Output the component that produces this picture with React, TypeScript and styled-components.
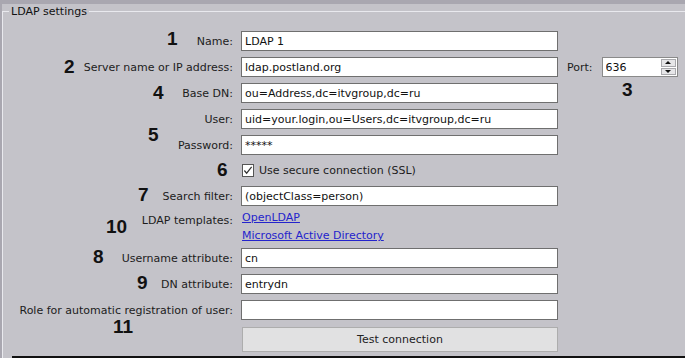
import React from 'react';
import styled, { createGlobalStyle } from 'styled-components';

const GlobalStyle = createGlobalStyle`
  html, body {
    margin: 0;
    padding: 0;
    background: #c4c3c9;
    overflow: hidden;
  }
  body {
    font-family: "DejaVu Sans", Verdana, sans-serif;
    font-size: 11px;
    color: #1c1c1c;
  }
`;

type Badge = { n: string, x: number, y: number };

const badges: Badge[] = [
  { n: '1', x: 167, y: 29 },
  { n: '2', x: 64, y: 57 },
  { n: '3', x: 622, y: 80 },
  { n: '4', x: 153, y: 83 },
  { n: '5', x: 148, y: 125 },
  { n: '6', x: 217, y: 160 },
  { n: '7', x: 138, y: 185 },
  { n: '10', x: 106, y: 217 },
  { n: '8', x: 93, y: 247 },
  { n: '9', x: 137, y: 273 },
  { n: '11', x: 113, y: 317 },
];

const fields = [
  { label: 'Name:', value: 'LDAP 1' },
  { label: 'Server name or IP address:', value: 'ldap.postland.org', port: true },
  { label: 'Base DN:', value: 'ou=Address,dc=itvgroup,dc=ru' },
  { label: 'User:', value: 'uid=your.login,ou=Users,dc=itvgroup,dc=ru' },
  { label: 'Password:', value: '*****' },
];

export default function App(): React.FunctionComponentElement<JSX.Element> {
  return (
    <Window>
      <GlobalStyle />
      <Panel>
        <GroupBox>
          <Legend>LDAP settings</Legend>
          <Form>
            {fields.map(f => (
              <React.Fragment key={f.label}>
                <Label>{f.label}</Label>
                <Input defaultValue={f.value} />
                {f.port && (
                  <PortGroup>
                    <span>Port:</span>
                    <Spin>
                      <SpinInput defaultValue='636' />
                      <SpinButtons>
                        <SpinButton $up><i /></SpinButton>
                        <SpinButton><i /></SpinButton>
                      </SpinButtons>
                    </Spin>
                  </PortGroup>
                )}
              </React.Fragment>
            ))}

            <CheckRow>
              <CheckBox>
                <svg width='11' height='11' viewBox='0 0 11 11'>
                  <path d='M1.5 5.5 L4 8.5 L9.5 1.5' fill='none' stroke='#333' strokeWidth='1.3' />
                </svg>
              </CheckBox>
              <span>Use secure connection (SSL)</span>
            </CheckRow>

            <Label>Search filter:</Label>
            <Input defaultValue='(objectClass=person)' />

            <Label $top>LDAP templates:</Label>
            <Links>
              <Link href='#'>OpenLDAP</Link>
              <Link href='#'>Microsoft Active Directory</Link>
            </Links>

            <Label>Username attribute:</Label>
            <Input defaultValue='cn' />

            <Label>DN attribute:</Label>
            <Input defaultValue='entrydn' />

            <Label>Role for automatic registration of user:</Label>
            <Input defaultValue='' />

            <TestButton type='button'>Test connection</TestButton>
          </Form>
          <NextPane />
        </GroupBox>
      </Panel>

      {badges.map(b => (
        <Number key={b.n} $x={b.x} $y={b.y}>{b.n}</Number>
      ))}
    </Window>
  );
}

// STYLES
const Window = styled.div`
  position: relative;
  box-sizing: border-box;
  height: 358px;
  background: #a9a7b0;
  padding: 4px 0 0 2px;
  display: flex;
  flex-direction: column;
  overflow: hidden;
`

const Panel = styled.div`
  flex: 1;
  background: #c4c3c9;
  padding-top: 1px;
`

const GroupBox = styled.fieldset`
  margin: 0;
  padding: 0;
  border: 0;
  border-top: 1px solid #e9e9ee;
  border-left: 1px solid #e9e9ee;
  min-width: 0;
`

const Legend = styled.legend`
  margin-left: 6px;
  padding: 0 2px;
  line-height: 13px;
  font-size: 11px;
  color: #111;
`

const Form = styled.div`
  display: grid;
  grid-template-columns: 230px 317px auto;
  column-gap: 8px;
  row-gap: 6px;
  align-items: center;
  margin-top: 13px;
`

const Label = styled.label<{ $top?: boolean }>`
  grid-column: 1;
  justify-self: end;
  white-space: nowrap;
  align-self: ${props => props.$top ? 'start' : 'center'};
  padding-top: ${props => props.$top ? '2px' : '0'};
  line-height: 13px;
`

const Input = styled.input`
  grid-column: 2;
  box-sizing: border-box;
  width: 100%;
  height: 20px;
  margin: 0;
  padding: 0 3px;
  border: 1px solid #6f6f6f;
  background: #fff;
  font-family: inherit;
  font-size: 11px;
  color: #111;
  outline: none;
`

const PortGroup = styled.div`
  grid-column: 3;
  display: flex;
  align-items: center;
  gap: 9px;
  margin-left: 1px;
`

const Spin = styled.div`
  box-sizing: border-box;
  display: flex;
  width: 76px;
  height: 20px;
  border: 1px solid #8a8a8a;
  background: #fff;
`

const SpinInput = styled.input`
  flex: 1;
  min-width: 0;
  border: 0;
  padding: 0 3px;
  font-family: inherit;
  font-size: 11px;
  color: #111;
  outline: none;
`

const SpinButtons = styled.div`
  display: flex;
  flex-direction: column;
  width: 15px;
  padding: 1px 1px 1px 0;
  gap: 1px;
`

const SpinButton = styled.div<{ $up?: boolean }>`
  flex: 1;
  display: flex;
  align-items: center;
  justify-content: center;
  background: #e6e6e8;
  border: 1px solid #a9a9ad;

  & > i {
    width: 0;
    height: 0;
    border-left: 3px solid transparent;
    border-right: 3px solid transparent;
    ${props => props.$up ? 'border-bottom: 3px solid #111;' : 'border-top: 3px solid #111;'}
  }
`

const CheckRow = styled.div`
  grid-column: 2;
  display: flex;
  align-items: center;
  gap: 5px;
  height: 19px;
  padding-left: 1px;
`

const CheckBox = styled.span`
  box-sizing: border-box;
  display: flex;
  align-items: center;
  justify-content: center;
  width: 12px;
  height: 13px;
  border: 1px solid #555;
  background: #fff;
`

const Links = styled.div`
  grid-column: 2;
  display: flex;
  flex-direction: column;
  align-items: flex-start;
  gap: 6px;
  height: 30px;
  padding-left: 1px;
`

const Link = styled.a`
  color: #2424cc;
  text-decoration: underline;
  line-height: 12px;
`

const TestButton = styled.button`
  grid-column: 2;
  box-sizing: border-box;
  height: 25px;
  margin: 1px 0 0 1px;
  border: 1px solid #adadad;
  background: #e1e1e2;
  font-family: inherit;
  font-size: 11px;
  color: #222;
`

const NextPane = styled.div`
  height: 20px;
  margin: 4px 0 0 9px;
  border-top: 2px solid #111;
  border-left: 2px solid #111;
  background: #c9c8cd;
`

const Number = styled.span<{ $x: number, $y: number }>`
  position: absolute;
  left: ${props => props.$x}px;
  top: ${props => props.$y}px;
  font-family: "Liberation Sans", Arial, sans-serif;
  font-weight: 700;
  font-size: 19px;
  line-height: 1;
  color: #111;
`
